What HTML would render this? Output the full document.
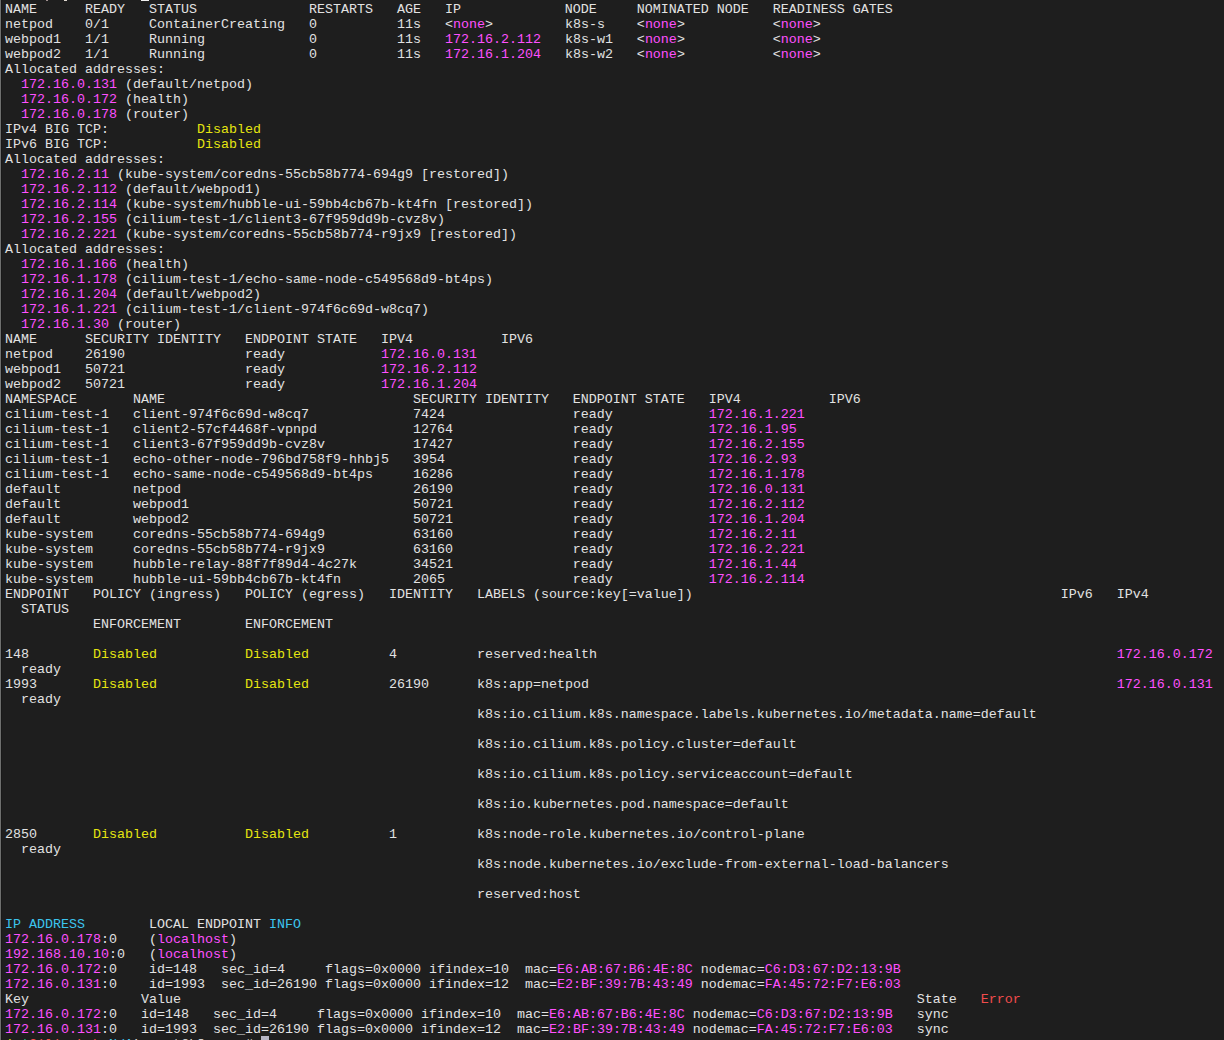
<!DOCTYPE html>
<html><head><meta charset="utf-8"><style>
html,body{margin:0;padding:0;background:#1e1e1e;}
body{width:1224px;height:1040px;overflow:hidden;position:relative;}
#bl{position:absolute;left:0;top:0;width:1px;height:1040px;background:#6e6f6e;}
#bl2{position:absolute;left:1px;top:0;width:1px;height:1040px;background:#181818;}
pre{position:absolute;left:5px;top:2px;margin:0;font-family:"Liberation Mono",monospace;font-size:13.3333px;line-height:15px;color:#e2e2e2;white-space:pre;}
.m{color:#ff50ff}
.y{color:#e5e510}
.c{color:#3cc4ee}
.r{color:#f14c4c}
.g{color:#23d18b}
.cur{position:absolute;background:#c8c8c8;}
.mk{position:absolute;background:#b0b0b0;}
</style></head><body>
<div id="bl"></div><div id="bl2"></div>
<div class="mk" style="left:46px;top:0;width:2px;height:1px;background:#a09090"></div>
<div class="mk" style="left:64px;top:0;width:3px;height:1px;background:#e0d8d0"></div>
<div class="cur" style="left:141px;top:0;width:8px;height:1px;background:#f0f0f0"></div>
<pre>NAME      READY   STATUS              RESTARTS   AGE   IP             NODE     NOMINATED NODE   READINESS GATES
netpod    0/1     ContainerCreating   0          11s   &lt;<span class="m">none</span>&gt;         k8s-s    &lt;<span class="m">none</span>&gt;           &lt;<span class="m">none</span>&gt;
webpod1   1/1     Running             0          11s   <span class="m">172.16.2.112</span>   k8s-w1   &lt;<span class="m">none</span>&gt;           &lt;<span class="m">none</span>&gt;
webpod2   1/1     Running             0          11s   <span class="m">172.16.1.204</span>   k8s-w2   &lt;<span class="m">none</span>&gt;           &lt;<span class="m">none</span>&gt;
Allocated addresses:
  <span class="m">172.16.0.131</span> (default/netpod)
  <span class="m">172.16.0.172</span> (health)
  <span class="m">172.16.0.178</span> (router)
IPv4 BIG TCP:           <span class="y">Disabled</span>
IPv6 BIG TCP:           <span class="y">Disabled</span>
Allocated addresses:
  <span class="m">172.16.2.11</span> (kube-system/coredns-55cb58b774-694g9 [restored])
  <span class="m">172.16.2.112</span> (default/webpod1)
  <span class="m">172.16.2.114</span> (kube-system/hubble-ui-59bb4cb67b-kt4fn [restored])
  <span class="m">172.16.2.155</span> (cilium-test-1/client3-67f959dd9b-cvz8v)
  <span class="m">172.16.2.221</span> (kube-system/coredns-55cb58b774-r9jx9 [restored])
Allocated addresses:
  <span class="m">172.16.1.166</span> (health)
  <span class="m">172.16.1.178</span> (cilium-test-1/echo-same-node-c549568d9-bt4ps)
  <span class="m">172.16.1.204</span> (default/webpod2)
  <span class="m">172.16.1.221</span> (cilium-test-1/client-974f6c69d-w8cq7)
  <span class="m">172.16.1.30</span> (router)
NAME      SECURITY IDENTITY   ENDPOINT STATE   IPV4           IPV6
netpod    26190               ready            <span class="m">172.16.0.131</span>
webpod1   50721               ready            <span class="m">172.16.2.112</span>
webpod2   50721               ready            <span class="m">172.16.1.204</span>
NAMESPACE       NAME                               SECURITY IDENTITY   ENDPOINT STATE   IPV4           IPV6
cilium-test-1   client-974f6c69d-w8cq7             7424                ready            <span class="m">172.16.1.221</span>
cilium-test-1   client2-57cf4468f-vpnpd            12764               ready            <span class="m">172.16.1.95</span>
cilium-test-1   client3-67f959dd9b-cvz8v           17427               ready            <span class="m">172.16.2.155</span>
cilium-test-1   echo-other-node-796bd758f9-hhbj5   3954                ready            <span class="m">172.16.2.93</span>
cilium-test-1   echo-same-node-c549568d9-bt4ps     16286               ready            <span class="m">172.16.1.178</span>
default         netpod                             26190               ready            <span class="m">172.16.0.131</span>
default         webpod1                            50721               ready            <span class="m">172.16.2.112</span>
default         webpod2                            50721               ready            <span class="m">172.16.1.204</span>
kube-system     coredns-55cb58b774-694g9           63160               ready            <span class="m">172.16.2.11</span>
kube-system     coredns-55cb58b774-r9jx9           63160               ready            <span class="m">172.16.2.221</span>
kube-system     hubble-relay-88f7f89d4-4c27k       34521               ready            <span class="m">172.16.1.44</span>
kube-system     hubble-ui-59bb4cb67b-kt4fn         2065                ready            <span class="m">172.16.2.114</span>
ENDPOINT   POLICY (ingress)   POLICY (egress)   IDENTITY   LABELS (source:key[=value])                                              IPv6   IPv4
  STATUS
           ENFORCEMENT        ENFORCEMENT

148        <span class="y">Disabled</span>           <span class="y">Disabled</span>          4          reserved:health                                                                 <span class="m">172.16.0.172</span>
  ready
1993       <span class="y">Disabled</span>           <span class="y">Disabled</span>          26190      k8s:app=netpod                                                                  <span class="m">172.16.0.131</span>
  ready
                                                           k8s:io.cilium.k8s.namespace.labels.kubernetes.io/metadata.name=default

                                                           k8s:io.cilium.k8s.policy.cluster=default

                                                           k8s:io.cilium.k8s.policy.serviceaccount=default

                                                           k8s:io.kubernetes.pod.namespace=default

2850       <span class="y">Disabled</span>           <span class="y">Disabled</span>          1          k8s:node-role.kubernetes.io/control-plane
  ready
                                                           k8s:node.kubernetes.io/exclude-from-external-load-balancers

                                                           reserved:host

<span class="c">IP ADDRESS</span>        LOCAL ENDPOINT <span class="c">INFO</span>
<span class="m">172.16.0.178</span>:0    (<span class="m">localhost</span>)
<span class="m">192.168.10.10</span>:0   (<span class="m">localhost</span>)
<span class="m">172.16.0.172</span>:0    id=148   sec_id=4     flags=0x0000 ifindex=10  mac=<span class="m">E6:AB:67:B6:4E:8C</span> nodemac=<span class="m">C6:D3:67:D2:13:9B</span>
<span class="m">172.16.0.131</span>:0    id=1993  sec_id=26190 flags=0x0000 ifindex=12  mac=<span class="m">E2:BF:39:7B:43:49</span> nodemac=<span class="m">FA:45:72:F7:E6:03</span>
Key              Value                                                                                            State   <span class="r">Error</span>
<span class="m">172.16.0.172</span>:0   id=148   sec_id=4     flags=0x0000 ifindex=10  mac=<span class="m">E6:AB:67:B6:4E:8C</span> nodemac=<span class="m">C6:D3:67:D2:13:9B</span>   sync
<span class="m">172.16.0.131</span>:0   id=1993  sec_id=26190 flags=0x0000 ifindex=12  mac=<span class="m">E2:BF:39:7B:43:49</span> nodemac=<span class="m">FA:45:72:F7:E6:03</span>   sync
<span class="y">(</span> <span class="g">|</span><span class="r">CiliumLab</span>:<span class="c">N/A</span>) root@k8s-s:~# </pre>
<div class="cur" style="left:261px;top:1036px;width:8px;height:4px;background:#b4b4c4"></div>
</body></html>
